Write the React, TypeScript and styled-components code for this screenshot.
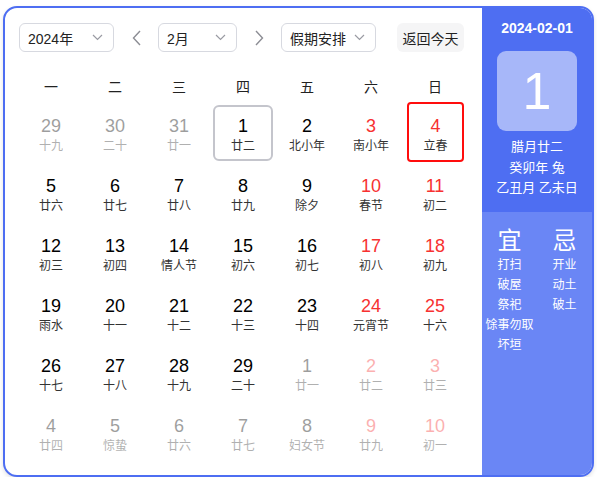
import styled, { createGlobalStyle } from 'styled-components';

const GlobalStyle = createGlobalStyle`
  body {
    margin: 0;
    background: #fff;
    font-family: "Liberation Sans", "Noto Sans CJK SC", sans-serif;
  }
`;

const BLUE = '#4e6ef2';
const RED = '#f73131';

const Card = styled.div`
  margin: 6px 3px 0 3px;
  height: 471px;
  box-sizing: border-box;
  border: 2px solid ${BLUE};
  border-radius: 14px;
  overflow: hidden;
  display: flex;
  background: #fff;
  box-shadow: 0 2px 4px rgba(0, 0, 0, 0.12);
`;

const Main = styled.div`
  flex: 1;
  padding: 15px 0 0 14px;
`;

const Toolbar = styled.div`
  display: flex;
  align-items: center;
  height: 29px;
`;

const SelectBox = styled.div<{ $width: number }>`
  width: ${(p) => p.$width}px;
  height: 29px;
  box-sizing: border-box;
  border: 1px solid #d7d9e0;
  border-radius: 6px;
  display: flex;
  align-items: center;
  justify-content: space-between;
  padding: 0 10px 0 8px;
  font-size: 14px;
  color: #222;
`;

const ArrowButton = styled.div<{ $gap: number }>`
  width: 20px;
  display: flex;
  justify-content: center;
  margin: 0 ${(p) => p.$gap}px;
`;

const TodayButton = styled.div`
  margin-left: 21px;
  width: 67px;
  height: 29px;
  border-radius: 6px;
  background: #f5f5f6;
  display: flex;
  align-items: center;
  justify-content: center;
  font-size: 14px;
  color: #222;
`;

const WeekRow = styled.div`
  display: grid;
  grid-template-columns: repeat(7, 64px);
  margin-top: 20px;
  height: 28px;
  align-items: center;
`;

const WeekCell = styled.div`
  text-align: center;
  font-size: 14px;
  color: #222;
`;

const Grid = styled.div`
  display: grid;
  grid-template-columns: repeat(7, 64px);
  grid-auto-rows: 60px;
  margin-top: 2px;
`;

const Cell = styled.div<{ $today?: boolean; $selected?: boolean; $dim?: boolean }>`
  box-sizing: border-box;
  margin: ${(p) => (p.$selected ? '0 3px 0 4px' : '3px 2px 1px 2px')};
  border: 2px solid
    ${(p) => (p.$selected ? '#ff0d0d' : p.$today ? '#c4c5cc' : 'transparent')};
  border-radius: ${(p) => (p.$selected ? '4px' : '6px')};
  display: flex;
  flex-direction: column;
  align-items: center;
  padding-top: ${(p) => (p.$selected ? '11px' : '8px')};
  opacity: ${(p) => (p.$dim ? 0.38 : 1)};
`;

const DayNum = styled.div<{ $red?: boolean }>`
  font-size: 18px;
  line-height: 22px;
  color: ${(p) => (p.$red ? RED : '#000')};
`;

const Lunar = styled.div`
  font-size: 12px;
  line-height: 16px;
  margin-top: 1px;
  color: #333;
  white-space: nowrap;
`;

const Side = styled.div`
  width: 110px;
  display: flex;
  flex-direction: column;
  color: #fff;
`;

const SideTop = styled.div`
  background: ${BLUE};
  display: flex;
  flex-direction: column;
  align-items: center;
  padding: 10px 0 13px;
`;

const SideDate = styled.div`
  font-size: 14px;
  font-weight: bold;
  line-height: 20px;
`;

const BigDay = styled.div`
  width: 80px;
  height: 80px;
  margin-top: 13px;
  border-radius: 9px;
  background: rgba(255, 255, 255, 0.5);
  display: flex;
  align-items: center;
  justify-content: center;
  font-size: 52px;
  font-family: "Liberation Sans", sans-serif;
`;

const SideLines = styled.div`
  margin-top: 6px;
  font-size: 13px;
  line-height: 20.5px;
  text-align: center;
`;

const SideBottom = styled.div`
  flex: 1;
  background: #6a86f5;
  display: grid;
  grid-template-columns: 55px 55px;
  align-items: start;
  padding-top: 15px;
`;

const YiJiColumn = styled.div`
  display: flex;
  flex-direction: column;
  align-items: center;
`;

const YiJiTitle = styled.div`
  font-size: 24px;
  line-height: 28px;
`;

const YiJiItem = styled.div`
  font-size: 12px;
  line-height: 20px;
  white-space: nowrap;
`;

const Chevron = () => (
  <svg width="11" height="7" viewBox="0 0 11 7" fill="none">
    <path d="M1 1l4.5 4.5L10 1" stroke="#9a9ba3" strokeWidth="1.2" />
  </svg>
);

const Arrow = ({ dir }: { dir: 'left' | 'right' }) => (
  <svg width="9" height="16" viewBox="0 0 9 16" fill="none">
    <path
      d={dir === 'left' ? 'M8 1L1.5 8 8 15' : 'M1 1l6.5 7L1 15'}
      stroke="#8c8d94"
      strokeWidth="1.4"
    />
  </svg>
);

type Day = { n: number; l: string; red?: boolean; dim?: boolean; today?: boolean; selected?: boolean };

const days: Day[] = [
  { n: 29, l: '十九', dim: true },
  { n: 30, l: '二十', dim: true },
  { n: 31, l: '廿一', dim: true },
  { n: 1, l: '廿二', today: true },
  { n: 2, l: '北小年' },
  { n: 3, l: '南小年', red: true },
  { n: 4, l: '立春', red: true, selected: true },
  { n: 5, l: '廿六' },
  { n: 6, l: '廿七' },
  { n: 7, l: '廿八' },
  { n: 8, l: '廿九' },
  { n: 9, l: '除夕' },
  { n: 10, l: '春节', red: true },
  { n: 11, l: '初二', red: true },
  { n: 12, l: '初三' },
  { n: 13, l: '初四' },
  { n: 14, l: '情人节' },
  { n: 15, l: '初六' },
  { n: 16, l: '初七' },
  { n: 17, l: '初八', red: true },
  { n: 18, l: '初九', red: true },
  { n: 19, l: '雨水' },
  { n: 20, l: '十一' },
  { n: 21, l: '十二' },
  { n: 22, l: '十三' },
  { n: 23, l: '十四' },
  { n: 24, l: '元宵节', red: true },
  { n: 25, l: '十六', red: true },
  { n: 26, l: '十七' },
  { n: 27, l: '十八' },
  { n: 28, l: '十九' },
  { n: 29, l: '二十' },
  { n: 1, l: '廿一', dim: true },
  { n: 2, l: '廿二', dim: true, red: true },
  { n: 3, l: '廿三', dim: true, red: true },
  { n: 4, l: '廿四', dim: true },
  { n: 5, l: '惊蛰', dim: true },
  { n: 6, l: '廿六', dim: true },
  { n: 7, l: '廿七', dim: true },
  { n: 8, l: '妇女节', dim: true },
  { n: 9, l: '廿九', dim: true, red: true },
  { n: 10, l: '初一', dim: true, red: true },
];

const weekNames = ['一', '二', '三', '四', '五', '六', '日'];
const yi = ['打扫', '破屋', '祭祀', '馀事勿取', '坏垣'];
const ji = ['开业', '动土', '破土'];

const App = () => {
  return (
    <>
      <GlobalStyle />
      <Card>
        <Main>
          <Toolbar>
            <SelectBox $width={95}>
              <span>2024年</span>
              <Chevron />
            </SelectBox>
            <ArrowButton $gap={12}>
              <Arrow dir="left" />
            </ArrowButton>
            <SelectBox $width={79}>
              <span>2月</span>
              <Chevron />
            </SelectBox>
            <ArrowButton $gap={12}>
              <Arrow dir="right" />
            </ArrowButton>
            <SelectBox $width={95}>
              <span>假期安排</span>
              <Chevron />
            </SelectBox>
            <TodayButton>返回今天</TodayButton>
          </Toolbar>
          <WeekRow>
            {weekNames.map((w) => (
              <WeekCell key={w}>{w}</WeekCell>
            ))}
          </WeekRow>
          <Grid>
            {days.map((d, i) => (
              <Cell key={i} $today={d.today} $selected={d.selected} $dim={d.dim}>
                <DayNum $red={d.red}>{d.n}</DayNum>
                <Lunar>{d.l}</Lunar>
              </Cell>
            ))}
          </Grid>
        </Main>
        <Side>
          <SideTop>
            <SideDate>2024-02-01</SideDate>
            <BigDay>1</BigDay>
            <SideLines>
              <div>腊月廿二</div>
              <div>癸卯年 兔</div>
              <div>乙丑月 乙未日</div>
            </SideLines>
          </SideTop>
          <SideBottom>
            <YiJiColumn>
              <YiJiTitle>宜</YiJiTitle>
              {yi.map((t) => (
                <YiJiItem key={t}>{t}</YiJiItem>
              ))}
            </YiJiColumn>
            <YiJiColumn>
              <YiJiTitle>忌</YiJiTitle>
              {ji.map((t) => (
                <YiJiItem key={t}>{t}</YiJiItem>
              ))}
            </YiJiColumn>
          </SideBottom>
        </Side>
      </Card>
    </>
  );
};

export default App;
